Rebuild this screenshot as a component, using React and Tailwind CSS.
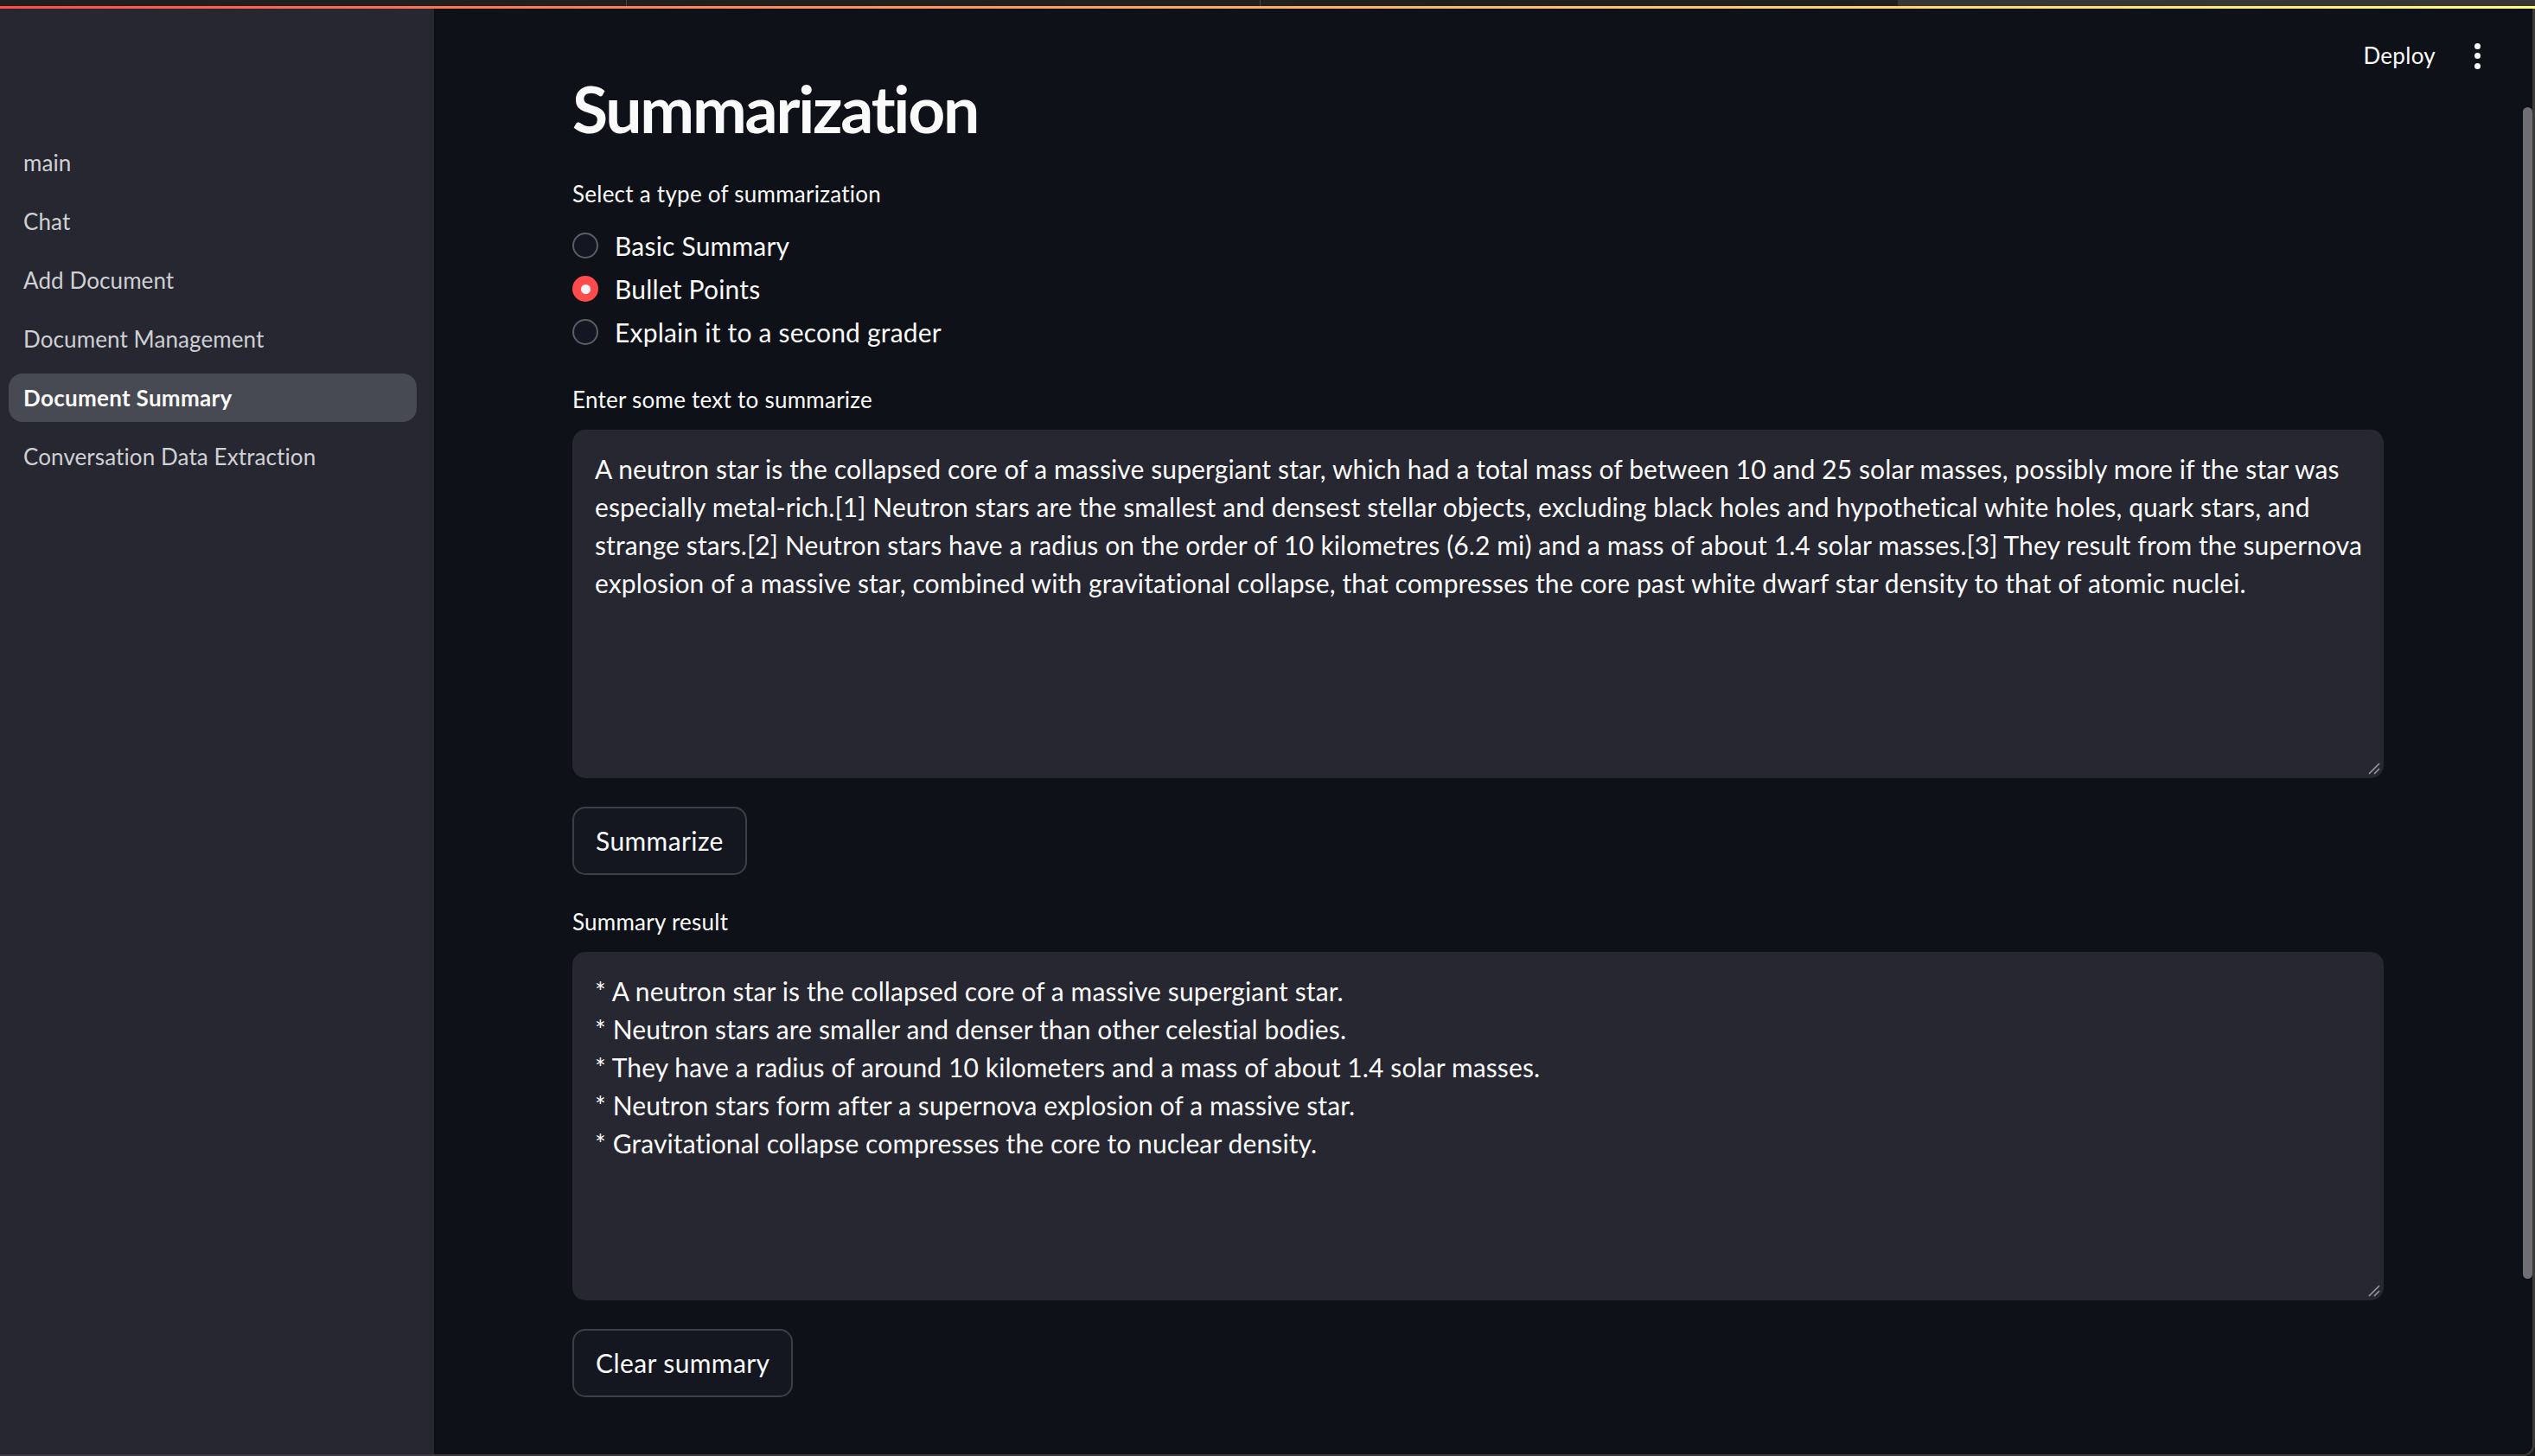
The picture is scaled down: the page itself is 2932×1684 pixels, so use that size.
import React from "react";

const navItems = [
  "main",
  "Chat",
  "Add Document",
  "Document Management",
  "Document Summary",
  "Conversation Data Extraction",
];

const sourceLines = [
  "A neutron star is the collapsed core of a massive supergiant star, which had a total mass of between 10 and 25 solar masses, possibly more if the star was",
  "especially metal-rich.[1] Neutron stars are the smallest and densest stellar objects, excluding black holes and hypothetical white holes, quark stars, and",
  "strange stars.[2] Neutron stars have a radius on the order of 10 kilometres (6.2 mi) and a mass of about 1.4 solar masses.[3] They result from the supernova",
  "explosion of a massive star, combined with gravitational collapse, that compresses the core past white dwarf star density to that of atomic nuclei.",
];

const summaryLines = [
  "* A neutron star is the collapsed core of a massive supergiant star.",
  "* Neutron stars are smaller and denser than other celestial bodies.",
  "* They have a radius of around 10 kilometers and a mass of about 1.4 solar masses.",
  "* Neutron stars form after a supernova explosion of a massive star.",
  "* Gravitational collapse compresses the core to nuclear density.",
];

function ResizeHandle() {
  return (
    <svg
      className="absolute right-[3px] bottom-[3px]"
      width="16"
      height="16"
      viewBox="0 0 16 16"
    >
      <line x1="2" y1="14" x2="14" y2="2" stroke="#9a9aa0" strokeWidth="1.6" />
      <line x1="8" y1="14" x2="14" y2="8" stroke="#9a9aa0" strokeWidth="1.6" />
    </svg>
  );
}

function TextBox({ lines }) {
  return (
    <div className="relative h-[403px] w-[2095px] rounded-[15px] bg-[#262730] pl-[26px] pt-[23px] text-[30px] leading-[44px] tracking-[0.11px] text-[#fafafa]">
      {lines.map((l, i) => (
        <div key={i} className="whitespace-pre">
          {l}
        </div>
      ))}
      <ResizeHandle />
    </div>
  );
}

function Radio({ label, checked }) {
  return (
    <div className="flex h-[50px] items-center gap-[19px]">
      {checked ? (
        <div className="flex h-[30px] w-[30px] items-center justify-center rounded-full bg-[#ff4b4b]">
          <div className="h-[11px] w-[11px] rounded-full bg-[#f5f5f7]" />
        </div>
      ) : (
        <div className="h-[30px] w-[30px] rounded-full border-2 border-[#5c5e66] bg-[#131722]" />
      )}
      <span className="text-[30px] tracking-[0.2px] text-[#fafafa]">{label}</span>
    </div>
  );
}

function Button({ children }) {
  return (
    <div className="flex h-[79px] items-center self-start rounded-[15px] border-2 border-[#3d3f47] bg-[#141720] px-[25px] text-[30px] tracking-[0.4px] text-[#fafafa]">
      {children}
    </div>
  );
}

export default function App() {
  return (
    <div className="relative flex h-[1684px] w-[2932px] flex-col overflow-hidden bg-[#1b1b1b] font-['Lato',sans-serif]">
      {/* browser tab strip */}
      <div className="flex h-[7px] bg-[#202020]">
        <div className="w-[725px] border-r border-[#444]" />
        <div className="w-[733px] border-r border-[#444]" />
        <div className="w-[737px]" />
        <div className="flex-1 bg-[#363636]" />
      </div>
      {/* decoration bar */}
      <div className="h-[3px] bg-gradient-to-r from-[#ff4b4b] to-[#fffd80]" />

      <div className="flex flex-1 overflow-hidden rounded-br-[14px] border-b-2 border-r-[3px] border-[#3a3a3a]">
        {/* sidebar */}
        <aside className="flex w-[502px] shrink-0 flex-col gap-[12px] bg-[#262730] pl-[10px] pr-[20px] pt-[150px]">
          {navItems.map((item) => {
            const active = item === "Document Summary";
            return (
              <div
                key={item}
                className={
                  active
                    ? "flex h-[56px] items-center rounded-[16px] bg-[#474953] pl-[17px] text-[26px] font-bold tracking-[0.3px] text-[#fafafa]"
                    : "flex h-[56px] items-center rounded-[16px] pl-[17px] text-[26px] tracking-[0.1px] text-[#cfd0d4]"
                }
              >
                {item}
              </div>
            );
          })}
        </aside>

        {/* main */}
        <main className="relative flex-1 bg-[#0e1117]">
          {/* header overlay */}
          <div className="absolute right-[60px] top-[35px] flex items-center gap-[45px]">
            <span className="text-[26px] tracking-[0.3px] text-[#fafafa]">Deploy</span>
            <div className="flex flex-col items-center gap-[4.5px]">
              <div className="h-[7px] w-[7px] rounded-full bg-[#fafafa]" />
              <div className="h-[7px] w-[7px] rounded-full bg-[#fafafa]" />
              <div className="h-[7px] w-[7px] rounded-full bg-[#fafafa]" />
            </div>
          </div>
          {/* scrollbar */}
          <div className="absolute right-[0px] top-[114px] h-[1355px] w-[11px] rounded-full bg-[#6e6e73]" />

          <div className="flex flex-col pl-[160px] pt-[66px]">
            <h1 className="h-[98px] text-[75px] font-bold leading-[98px] tracking-[-2.2px] text-[#fafafa]">
              Summarization
            </h1>
            <div className="mt-[32px] h-[36px] text-[26px] leading-[36px] tracking-[0.25px] text-[#fafafa]">
              Select a type of summarization
            </div>
            <div className="mt-[17px] flex flex-col">
              <Radio label="Basic Summary" />
              <Radio label="Bullet Points" checked />
              <Radio label="Explain it to a second grader" />
            </div>
            <div className="mt-[35px] h-[36px] text-[26px] leading-[36px] tracking-[0.25px] text-[#fafafa]">
              Enter some text to summarize
            </div>
            <div className="mt-[17px]">
              <TextBox lines={sourceLines} />
            </div>
            <div className="mt-[33px] flex">
              <Button>Summarize</Button>
            </div>
            <div className="mt-[36px] h-[36px] text-[26px] leading-[36px] tracking-[0.25px] text-[#fafafa]">
              Summary result
            </div>
            <div className="mt-[17px]">
              <TextBox lines={summaryLines} />
            </div>
            <div className="mt-[33px] flex">
              <Button>Clear summary</Button>
            </div>
          </div>
        </main>
      </div>
    </div>
  );
}
